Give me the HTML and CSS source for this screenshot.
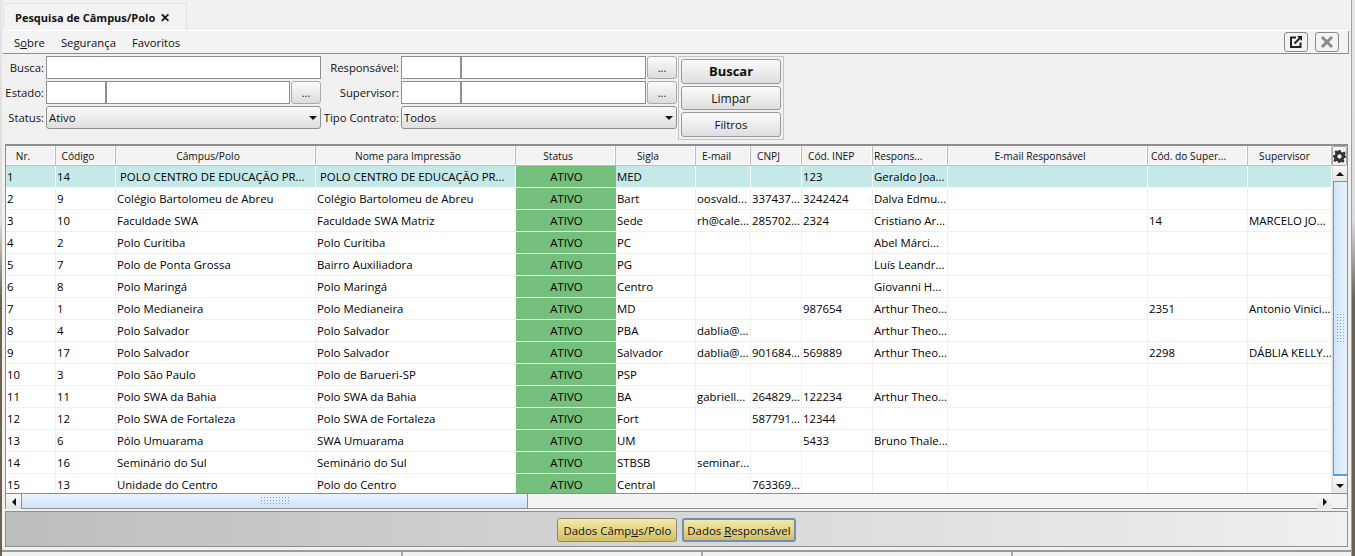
FILE: index.html
```html
<!DOCTYPE html>
<html lang="pt">
<head>
<meta charset="utf-8">
<title>Pesquisa de Câmpus/Polo</title>
<link rel="stylesheet" href="styles.css">
</head>
<body>
<div class="window">
  <div class="tabbar">
    <div class="tab"><span>Pesquisa de Câmpus/Polo</span><span class="tab-x">✕</span></div>
  </div>
  <div class="panel">
    <div class="menubar">
      <span class="menu">S<u>o</u>bre</span><span class="menu">Segurança</span><span class="menu">Favoritos</span>
      <span class="spacer"></span>
      <button class="tool">
        <svg width="14" height="14" viewBox="0 0 14 14"><path d="M7 2.500H2v9.500h9.500V7.500" fill="none" stroke="#222" stroke-width="2"/><path d="M5.500 8.500L11 3" stroke="#222" stroke-width="2"/><path d="M8 1h5v5z" fill="#222"/></svg>
      </button>
      <button class="tool">
        <svg width="14" height="14" viewBox="0 0 14 14"><path d="M2 2l10 10M12 2L2 12" stroke="#8a8a8a" stroke-width="3"/></svg>
      </button>
    </div>
    <div class="filters">
      <div class="fgrid">
        <label>Busca:</label>
        <div class="field"><span class="input grow"></span></div>
        <label>Responsável:</label>
        <div class="field"><span class="input code"></span><span class="input grow"></span><button class="dots">...</button></div>
        <label>Estado:</label>
        <div class="field"><span class="input code"></span><span class="input grow"></span><button class="dots">...</button></div>
        <label>Supervisor:</label>
        <div class="field"><span class="input code"></span><span class="input grow"></span><button class="dots">...</button></div>
        <label>Status:</label>
        <div class="field"><div class="select"><span>Ativo</span><i class="caret"></i></div></div>
        <label>Tipo Contrato:</label>
        <div class="field"><div class="select"><span>Todos</span><i class="caret"></i></div></div>
      </div>
      <div class="actions">
        <button class="act strong">Buscar</button>
        <button class="act">Limpar</button>
        <button class="act small">Filtros</button>
      </div>
    </div>
    <div class="table">
      <div class="row head">
        <div>Nr.</div><div>Código</div><div>Câmpus/Polo</div><div>Nome para Impressão</div><div>Status</div><div>Sigla</div><div class="l">E-mail</div><div class="l">CNPJ</div><div class="l">Cód. INEP</div><div class="l tight">Respons...</div><div>E-mail Responsável</div><div class="l tight2">Cód. do Super...</div><div class="sup">Supervisor</div>
        <div class="gear"><svg width="13" height="13" viewBox="0 0 24 24"><path fill="#333" fill-rule="evenodd" d="M10 0h4l1 3.500 2.500 1 3.200-1.800 2.800 2.800-1.800 3.200 1 2.500L24 10v4l-3.500 1-1 2.500 1.800 3.200-2.800 2.800-3.200-1.800-2.500 1L14 24h-4l-.8-2.800-2.500-1-3.200 1.800-2.800-2.800 1.800-3.200-1-2.500L0 14v-4l3.500-1 1-2.500L2.700 3.300l2.800-2.800 3.200 1.800 1.300-.5zM12 8a4 4 0 1 0 .01 0z"/></svg></div>
      </div>
      <div class="body">
        <div class="rows">
          <div class="row sel"><div>1</div><div>14</div><div class="pad">POLO CENTRO DE EDUCAÇÃO PR...</div><div class="pad">POLO CENTRO DE EDUCAÇÃO PR...</div><div class="ok">ATIVO</div><div>MED</div><div></div><div></div><div>123</div><div>Geraldo Joa...</div><div></div><div></div><div></div></div>
          <div class="row"><div>2</div><div>9</div><div>Colégio Bartolomeu de Abreu</div><div>Colégio Bartolomeu de Abreu</div><div class="ok">ATIVO</div><div>Bart</div><div>oosvald...</div><div>337437...</div><div>3242424</div><div>Dalva Edmu...</div><div></div><div></div><div></div></div>
          <div class="row"><div>3</div><div>10</div><div>Faculdade SWA</div><div>Faculdade SWA Matriz</div><div class="ok">ATIVO</div><div>Sede</div><div>rh@cale...</div><div>285702...</div><div>2324</div><div>Cristiano Ar...</div><div></div><div>14</div><div>MARCELO JO...</div></div>
          <div class="row"><div>4</div><div>2</div><div>Polo Curitiba</div><div>Polo Curitiba</div><div class="ok">ATIVO</div><div>PC</div><div></div><div></div><div></div><div>Abel Márci...</div><div></div><div></div><div></div></div>
          <div class="row"><div>5</div><div>7</div><div>Polo de Ponta Grossa</div><div>Bairro Auxiliadora</div><div class="ok">ATIVO</div><div>PG</div><div></div><div></div><div></div><div>Luís Leandr...</div><div></div><div></div><div></div></div>
          <div class="row"><div>6</div><div>8</div><div>Polo Maringá</div><div>Polo Maringá</div><div class="ok">ATIVO</div><div>Centro</div><div></div><div></div><div></div><div>Giovanni H...</div><div></div><div></div><div></div></div>
          <div class="row"><div>7</div><div>1</div><div>Polo Medianeira</div><div>Polo Medianeira</div><div class="ok">ATIVO</div><div>MD</div><div></div><div></div><div>987654</div><div>Arthur Theo...</div><div></div><div>2351</div><div>Antonio Vinici...</div></div>
          <div class="row"><div>8</div><div>4</div><div>Polo Salvador</div><div>Polo Salvador</div><div class="ok">ATIVO</div><div>PBA</div><div>dablia@...</div><div></div><div></div><div>Arthur Theo...</div><div></div><div></div><div></div></div>
          <div class="row"><div>9</div><div>17</div><div>Polo Salvador</div><div>Polo Salvador</div><div class="ok">ATIVO</div><div>Salvador</div><div>dablia@...</div><div>901684...</div><div>569889</div><div>Arthur Theo...</div><div></div><div>2298</div><div>DÁBLIA KELLY...</div></div>
          <div class="row"><div>10</div><div>3</div><div>Polo São Paulo</div><div>Polo de Barueri-SP</div><div class="ok">ATIVO</div><div>PSP</div><div></div><div></div><div></div><div></div><div></div><div></div><div></div></div>
          <div class="row"><div>11</div><div>11</div><div>Polo SWA da Bahia</div><div>Polo SWA da Bahia</div><div class="ok">ATIVO</div><div>BA</div><div>gabriell...</div><div>264829...</div><div>122234</div><div>Arthur Theo...</div><div></div><div></div><div></div></div>
          <div class="row"><div>12</div><div>12</div><div>Polo SWA de Fortaleza</div><div>Polo SWA de Fortaleza</div><div class="ok">ATIVO</div><div>Fort</div><div></div><div>587791...</div><div>12344</div><div></div><div></div><div></div><div></div></div>
          <div class="row"><div>13</div><div>6</div><div>Pólo Umuarama</div><div>SWA Umuarama</div><div class="ok">ATIVO</div><div>UM</div><div></div><div></div><div>5433</div><div>Bruno Thale...</div><div></div><div></div><div></div></div>
          <div class="row"><div>14</div><div>16</div><div>Seminário do Sul</div><div>Seminário do Sul</div><div class="ok">ATIVO</div><div>STBSB</div><div>seminar...</div><div></div><div></div><div></div><div></div><div></div><div></div></div>
          <div class="row"><div>15</div><div>13</div><div>Unidade do Centro</div><div>Polo do Centro</div><div class="ok">ATIVO</div><div>Central</div><div></div><div>763369...</div><div></div><div></div><div></div><div></div><div></div></div>
        </div>
        <div class="vbar">
          <div class="sbtn"><i class="up"></i></div>
          <div class="vthumb"><i class="vgrip"></i></div>
          <div class="sbtn"><i class="down"></i></div>
        </div>
      </div>
      <div class="hbar">
        <div class="sbtn"><i class="left"></i></div>
        <div class="hthumb"><i class="hgrip"></i></div>
        <div class="htrack"></div>
        <div class="sbtn"><i class="right"></i></div>
        <div class="corner"></div>
      </div>
    </div>
    <div class="footer">
      <button class="gold">Dados Câmp<u>u</u>s/Polo</button>
      <button class="gold focus">Dados <u>R</u>esponsável</button>
    </div>
  </div>
  <div class="status"><span class="s1"></span><span class="s2"></span><span class="s3"></span><span class="s4"></span></div>
</div>
</body>
</html>
```
FILE: styles.css
```css
* { box-sizing: border-box; }
html, body { margin: 0; height: 100%; overflow: hidden; }
body { background: linear-gradient(#e6e6e8 0, #dcdcdc 220px, #6b6350 300px); font: 11px "Open Sans", "Noto Sans", sans-serif; color: #111; }
button { font: inherit; color: inherit; padding: 0; }
.window { width: 1350px; height: 556px; margin-left: 2px; background: #f1f1f1; display: flex; flex-direction: column; padding-top: 3px; border-right: 1px solid #a0a0a0; }
.tabbar { height: 27px; display: flex; padding-left: 1px; }
.tab { width: 184px; height: 27px; border: 1px solid #e2e2e2; border-bottom: 0; background: #f3f3f3; display: flex; align-items: center; padding-left: 11px; gap: 5px; font-weight: 700; font-size: 11px; }
.tab-x { font-size: 12px; }
.panel { width: 1346px; margin-left: 1px; border-top: 1px solid #fff; display: flex; flex-direction: column; }
.menubar { height: 23px; display: flex; align-items: center; gap: 16px; padding: 1px 9px 0 11px; border-bottom: 1px solid #8e8e8e; border-right: 1px solid #8e8e8e; background: #f3f3f3; font-size: 11.3px; }
.spacer { flex: 1; }
.tool { width: 24px; height: 20px; border: 1px solid #8a8a8a; border-radius: 3px; background: #f3f3f3; display: flex; align-items: center; justify-content: center; margin: -1px 0 0 -9px; }
.filters { display: flex; padding-top: 2px; height: 90px; }
.fgrid { display: grid; grid-template-columns: 43px 275px 80px 276px; grid-auto-rows: 25px; }
.fgrid label { text-align: right; line-height: 23px; padding-right: 2px; white-space: nowrap; font-size: 11.3px; }
.field { display: flex; height: 23px; }
.input { height: 23px; background: #fff; border: 1px solid #8e8e8e; }
.input.code { width: 60px; }
.input.grow { flex: 1; }
.dots { width: 30px; height: 23px; border: 1px solid #aaa; border-radius: 3px; background: linear-gradient(#fbfbfb, #dcdcdc); margin-left: 1px; font-size: 11px; }
.select { flex: 1; height: 23px; border: 1px solid #8e8e8e; border-radius: 3px; background: linear-gradient(#fbfbfb, #dedede); display: flex; align-items: center; justify-content: space-between; padding: 0 3px 0 2px; font-size: 11.3px; }
.caret { border: 4px solid transparent; border-top-color: #111; margin-top: 4px; }
.actions { width: 106px; height: 84px; margin: 0 0 0 1px; border: 1px solid #c5c5c5; padding: 2px; display: flex; flex-direction: column; gap: 2px; }
.act { height: 25px; border: 1px solid #9a9a9a; border-radius: 3px; background: linear-gradient(#fbfbfb, #dedede); font-size: 12px; }
.act.strong { font-weight: 700; font-size: 13px; }
.act.small { font-size: 11.5px; }
.table { margin: 0 0 0 2px; width: 1343px; border: 1px solid #8e8e8e; border-top: 2px solid #8e8e8e; background: #fff; }
.row { display: grid; grid-template-columns: 50px 60px 200px 200px 100px 80px 55px 51px 71px 75px 200px 100px 84px; height: 22px; }
.row > div { white-space: nowrap; overflow: hidden; border-right: 1px solid #f0f0f0; border-bottom: 1px solid #f0f0f0; line-height: 21px; padding-left: 1px; font-size: 11.4px; color: #000; }
.row.sel > div { background: #c5e9e9; border-right-color: #fff; border-bottom-color: #fff; }
.row > div.pad { padding-left: 4px; }
.row > div.ok, .row.sel > div.ok { background: #74bf7c; text-align: center; border-right: 0; border-bottom-color: #f0f0f0; }
.row.head { height: 20px; grid-template-columns: 50px 60px 200px 200px 100px 80px 55px 51px 71px 75px 200px 100px 84px 15px; background: #f3f3f3; }
.row.head > div { border-style: solid; border-width: 0 1px 1px 0; border-color: #bdbdbd; box-shadow: inset -1px -1px 0 #fff; text-align: center; line-height: 20px; font-size: 10.2px; background: #f3f3f3; padding: 0 15px 0 0; color: #111; }
.row.head > div.l { text-align: left; padding: 0 0 0 6px; }
.row.head > div.l.tight { padding-left: 1px; }
.row.head > div.l.tight2 { padding-left: 3px; }
.row.head > div.sup { padding-right: 10px; }
.row.head > div.gear { border: 1px solid #aaa; border-radius: 2px; box-shadow: none; padding: 0; display: flex; align-items: center; justify-content: center; }
.body { display: flex; height: 327px; overflow: hidden; }
.rows { width: 1326px; flex: none; }
.vbar { width: 15px; display: flex; flex-direction: column; border-left: 1px solid #ddd; }
.sbtn { width: 15px; height: 15px; flex: none; display: flex; align-items: center; justify-content: center; background: linear-gradient(#fafafa, #e4e4e4); }
.vbar .sbtn { width: 14px; }
.up, .down, .left, .right { display: block; width: 0; height: 0; border: 4px solid transparent; }
.up { border-bottom-color: #111; margin-top: -4px; }
.down { border-top-color: #111; margin-top: 4px; }
.left { border-right-color: #111; margin-left: -4px; }
.right { border-left-color: #111; margin-left: 4px; }
.vthumb { flex: 1; margin-bottom: 2px; background: linear-gradient(90deg, #cfe3f8, #eaf3fd); border: 1px solid #5a9be8; border-width: 1px 0 2px 1px; display: flex; align-items: center; justify-content: center; }
.vgrip { width: 10px; height: 30px; background: radial-gradient(circle, #6ea7e6 0.7px, transparent 1px) 0 0 / 3px 3px; }
.hbar { display: flex; height: 15px; background: #f3f3f3; border-top: 1px solid #8e8e8e; }
.hthumb { width: 507px; background: linear-gradient(#eaf3fd, #cfe3f8); border-left: 1px solid #5a9be8; border-right: 1px solid #5a9be8; display: flex; align-items: center; justify-content: center; }
.hgrip { width: 30px; height: 10px; background: radial-gradient(circle, #6ea7e6 0.7px, transparent 1px) 0 0 / 3px 3px; }
.htrack { flex: 1; }
.corner { width: 15px; }
.footer { height: 36px; margin: 2px 0 0 2px; width: 1343px; border: 1px solid #8e8e8e; background: linear-gradient(90deg, #bdbdbd, #f0f0f0); display: flex; align-items: center; justify-content: center; gap: 5px; padding-top: 2px; }
.gold { height: 24px; padding: 0 5px; border: 1px solid #8e8a70; border-radius: 3px; background: linear-gradient(#f4eab0, #d2be62); font-size: 11.4px; }
.gold.focus { border: 2px solid #6f8fb5; padding: 0 3px; }
.status { margin-top: 3px; flex: 1; border-top: 2px solid #9a9a9a; display: flex; background: #f1f1f1; }
.status span { border-right: 2px solid #aaa; }
.s1 { width: 401px; } .s2 { width: 300px; } .s3 { width: 310px; } .s4 { flex: 1; border-right: 0 !important; }
```
